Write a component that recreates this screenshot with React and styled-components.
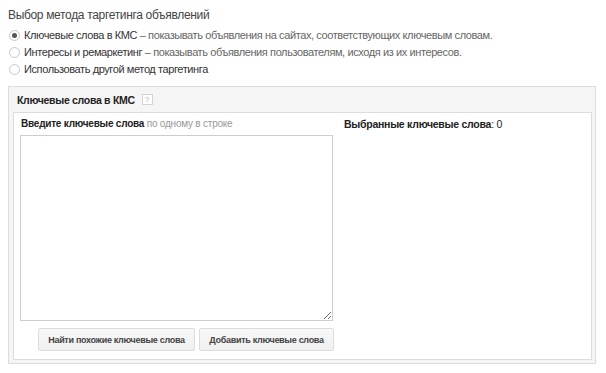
import React from "react";
import styled, { createGlobalStyle } from "styled-components";

const Global = createGlobalStyle`
  html, body { margin: 0; padding: 0; background: #fff; }
  body { font-family: "Liberation Sans", Arial, sans-serif; color: #333; }
`;

const Page = styled.div`
  width: 606px;
  height: 373px;
  padding: 7px 0 0 8px;
  box-sizing: border-box;
`;

const Title = styled.div`
  font-size: 12px;
  letter-spacing: -0.33px;
  color: #444;
  height: 16px;
  line-height: 16px;
  margin-bottom: 4.5px;
  white-space: nowrap;
`;

const Options = styled.div`
  display: flex;
  flex-direction: column;
  gap: 2px;
  margin-bottom: 9.5px;
`;

const Option = styled.label`
  display: flex;
  align-items: center;
  gap: 4px;
  height: 15px;
  font-size: 11px;
  letter-spacing: -0.4px;
  color: #333;
  white-space: nowrap;
`;

const Radio = styled.span`
  width: 11px;
  height: 11px;
  border-radius: 50%;
  border: 1px solid #c8c8c8;
  background: #fff;
  box-sizing: border-box;
  margin-left: 1px;
  display: flex;
  align-items: center;
  justify-content: center;
  &::after {
    content: "";
    width: 5px;
    height: 5px;
    border-radius: 50%;
    background: ${(p) => (p.checked ? "#555" : "transparent")};
  }
`;

const Desc = styled.span`
  color: #666;
`;

const Panel = styled.div`
  border: 1px solid #dcdcdc;
  background: #f5f5f5;
  width: 588px;
  box-sizing: border-box;
  padding: 0 3px 3px 4px;
`;

const PanelHead = styled.div`
  height: 25px;
  display: flex;
  align-items: center;
  gap: 7px;
  font-size: 10.5px;
  letter-spacing: -0.3px;
  font-weight: bold;
  color: #222;
  padding-left: 4px;
  white-space: nowrap;
`;

const Help = styled.span`
  width: 9px;
  height: 9px;
  border: 1px solid #d4d4d4;
  background: #fff;
  color: #aaa;
  font-size: 7px;
  letter-spacing: 0;
  font-weight: normal;
  display: flex;
  align-items: center;
  justify-content: center;
`;

const Body = styled.div`
  background: #fff;
  border: 1px solid #dcdcdc;
  display: grid;
  grid-template-columns: 323px 1fr;
  padding: 4px 0 0 6px;
  height: 248px;
  box-sizing: border-box;
`;

const Col = styled.div`
  display: flex;
  flex-direction: column;
`;

const Label = styled.div`
  font-size: ${(p) => p.size}px;
  letter-spacing: ${(p) => p.ls}px;
  font-weight: bold;
  color: #222;
  height: 14px;
  line-height: 14px;
  margin-bottom: 4px;
  padding-left: 1px;
  white-space: nowrap;
`;

const Hint = styled.span`
  font-weight: normal;
  color: #999;
`;

const Count = styled.span`
  font-weight: normal;
`;

const Area = styled.textarea`
  width: 313px;
  height: 186px;
  box-sizing: border-box;
  border: 1px solid #cdcdcd;
  resize: vertical;
  margin: 0;
  outline: none;
  font-family: "Liberation Sans", Arial, sans-serif;
`;

const Buttons = styled.div`
  display: flex;
  gap: 4px;
  margin-top: 7px;
  padding-left: 18px;
`;

const Button = styled.button`
  height: 23px;
  width: ${(p) => p.w}px;
  padding: 0;
  border: 1px solid #dcdcdc;
  border-radius: 2px;
  background: linear-gradient(#f8f8f8, #f0f0f0);
  font-family: "Liberation Sans", Arial, sans-serif;
  font-size: 9px;
  letter-spacing: -0.3px;
  font-weight: bold;
  color: #444;
  cursor: pointer;
  white-space: nowrap;
`;

export default function App() {
  return (
    <>
      <Global />
      <Page>
        <Title>Выбор метода таргетинга объявлений</Title>
        <Options>
          <Option>
            <Radio checked />
            <span>
              Ключевые слова в КМС <Desc>– показывать объявления на сайтах, соответствующих ключевым словам.</Desc>
            </span>
          </Option>
          <Option>
            <Radio />
            <span>
              Интересы и ремаркетинг <Desc>– показывать объявления пользователям, исходя из их интересов.</Desc>
            </span>
          </Option>
          <Option>
            <Radio />
            <span>Использовать другой метод таргетинга</span>
          </Option>
        </Options>
        <Panel>
          <PanelHead>
            Ключевые слова в КМС <Help>?</Help>
          </PanelHead>
          <Body>
            <Col>
              <Label size={10} ls={-0.22}>
                Введите ключевые слова <Hint>по одному в строке</Hint>
              </Label>
              <Area />
              <Buttons>
                <Button w={157}>Найти похожие ключевые слова</Button>
                <Button w={135}>Добавить ключевые слова</Button>
              </Buttons>
            </Col>
            <Col>
              <Label size={10.5} ls={-0.26}>
                Выбранные ключевые слова<Count>: 0</Count>
              </Label>
            </Col>
          </Body>
        </Panel>
      </Page>
    </>
  );
}
